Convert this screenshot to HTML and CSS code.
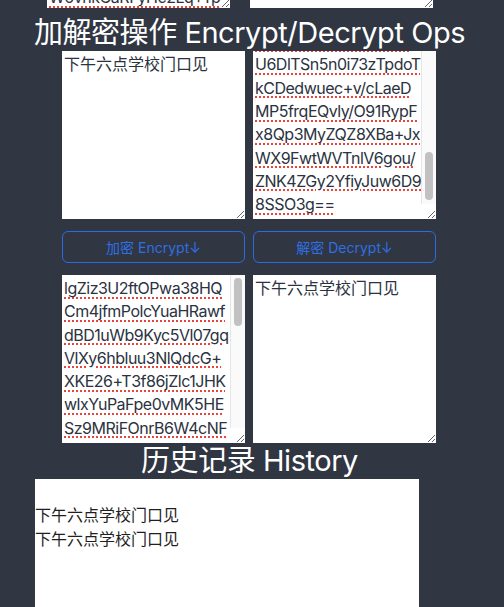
FILE: index.html
```html
<!DOCTYPE html>
<html lang="zh-CN">
<head>
<meta charset="utf-8">
<title>加解密操作 Encrypt/Decrypt Ops</title>
<link rel="stylesheet" href="styles.css">
</head>
<body>
<main class="page">
  <div class="prev-row">
    <div class="field">
      <textarea class="box cipher" data-scroll="19" spellcheck="false">Qx7PmA2kLr9Vb+Tc3N
eH5sJd0Wf8Yg1Ui6Ko
Zp4Bn/Xt7Ca2Rv9Me
Gl3Dq8Fw0Sy5Hj+Ln1
Ik6Ob2Pu9Ez4Tc7Va
Ms1Xr8Wn3Yq0Gd5Fh
Jk2Ce9Al/Bt6Ro4Zu
W6vnkGaRFyHc2Lq+Tp
Nd3Vx8Em1Hs5Ok0Pa
Yf7Bi2Cq9Rt4Gl6Uw
Dz0Jn3Mv/Ka8Se5Xo
Lh1Tq6Pw9Bc2Fy4Ri
Gu7Ak0Ns3Ze8Vm5Jd
Ox2Hb9Cl4Wq1Yt6Ep
Sg==</textarea>
      <div class="scrollbar"><div class="thumb" style="top: 22px"></div></div>
    </div>
    <textarea class="box" spellcheck="false"></textarea>
  </div>

  <h2 class="title title-ops">加解密操作 Encrypt/Decrypt Ops</h2>

  <div class="pair">
    <textarea class="box" spellcheck="false">下午六点学校门口见</textarea>
    <div class="field">
      <textarea class="box cipher" data-scroll="bottom" spellcheck="false">Hk3Qz8WmP2vNcR7tYb
aLq9XoE4uJfD1sGi0w
Tn6KyB+ZpVh5MrCe2Q
o8jUxS3gAdW7lF/bNm
Yt4iHq0zRk9PvLc1Ea
Gs2uXw8Oe/JnD5fM6y
Bp3ZhTq7Vk0rWiN4Ul
cE9aSx1gFm6Ho+Yd2j
Kv5tQb8zLn3CwR0Xp
fJ7Ue4yMi1DsA9Gq6
rO2hWk5NcT8lZ+Bv3
Pq8Lm1Xz6Rn0Jc4Ts
Ea3Wb7Yk/Hd9Fu2Gi
Nv5Qo1Ct8Zs4Mx0Bp
Jr6Kf2Ug9Ah3Tw+Ly
U6DlTSn5n0i73zTpdoT
kCDedwuec+v/cLaeD
MP5frqEQvly/O91RypF
x8Qp3MyZQZ8XBa+Jx
WX9FwtWVTnlV6gou/
ZNK4ZGy2YfiyJuw6D9
8SSO3g==</textarea>
      <div class="scrollbar"><div class="thumb" style="top: 101px"></div></div>
    </div>
  </div>

  <div class="pair actions">
    <button class="btn" type="button">加密 Encrypt↓</button>
    <button class="btn" type="button">解密 Decrypt↓</button>
  </div>

  <div class="pair">
    <div class="field">
      <textarea class="box cipher" spellcheck="false">lgZiz3U2ftOPwa38HQ
Cm4jfmPolcYuaHRawf
dBD1uWb9Kyc5Vl07gq
VlXy6hbluu3NlQdcG+
XKE26+T3f86jZlc1JHK
wlxYuPaFpe0vMK5HE
Sz9MRiFOnrB6W4cNF
Ta2Yp7Lk0Qm5Xv9Rd
Hc4Ns8Bw1Ej6Zg/Uo
Fi3Kt9Ma2Wq7Cy0Pl
Vb5Gr1Xe8Dn4Js+Oh
Am6Lu2Rk9Tz3Yf0Qw
Nc8Hp5Sd1Bi7Eg4Mv
Kx0Wo6Ft2Ul9Ca3Zj
Py7Gm4Rn/Vd1Lb8Ts
Qe2Jh5Xk0Ai6Nw9Cf
Oz3Bq8Yu1Mr4Dg7Hl
Eq==</textarea>
      <div class="scrollbar"><div class="thumb" style="top: 3px"></div></div>
    </div>
    <textarea class="box" spellcheck="false">下午六点学校门口见</textarea>
  </div>

  <h2 class="title title-history">历史记录 History</h2>

  <section class="history">
    <div class="history-item">下午六点学校门口见</div>
    <div class="history-item">下午六点学校门口见</div>
  </section>
</main>
<script src="script.js"></script>
</body>
</html>
```

FILE: styles.css
```css
html, body {
  margin: 0;
  padding: 0;
}

body {
  background: #303642;
  font-family: Inter, "Noto Sans CJK SC", sans-serif;
  overflow: hidden;
}

.page {
  display: flex;
  flex-direction: column;
}

.prev-row {
  height: 8px;
  overflow: hidden;
  display: flex;
  align-items: flex-end;
  gap: 20px;
  padding-left: 47px;
}

.title {
  margin: 0;
  padding-right: 5px;
  text-align: center;
  color: #ffffff;
  font-weight: 400;
  font-size: 29px;
  line-height: 36px;
  letter-spacing: -0.45px;
  white-space: nowrap;
}

.title-ops {
  margin-top: 7px;
}

.pair {
  display: flex;
  gap: 8px;
  padding-left: 62px;
}

.actions {
  margin: 12px 0;
}

.field {
  position: relative;
  flex: none;
  width: 183px;
  height: 168px;
}

.box {
  box-sizing: border-box;
  flex: none;
  display: block;
  width: 183px;
  height: 168px;
  margin: 0;
  padding: 2px;
  border: 0;
  outline: none;
  background: #ffffff;
  color: #2b3240;
  font-family: Inter, "Noto Sans CJK SC", sans-serif;
  font-size: 16px;
  line-height: 23.3px;
  resize: both;
}

.cipher {
  padding-right: 17px;
  white-space: pre;
  overflow: hidden;
  letter-spacing: -0.5px;
  text-decoration: underline dotted #e8433d;
  text-decoration-thickness: 2px;
  text-underline-offset: 3px;
}

.scrollbar {
  position: absolute;
  top: 0;
  right: 0;
  bottom: 15px;
  width: 15px;
  box-sizing: border-box;
  background: #fafafa;
  border-left: 1px solid #e6e6e6;
}

.thumb {
  position: absolute;
  left: 3px;
  width: 8px;
  height: 48px;
  border-radius: 4px;
  background: #c1c1c1;
}

.btn {
  box-sizing: border-box;
  flex: none;
  width: 183px;
  height: 32px;
  margin: 0;
  padding: 0;
  border: 1px solid #2d6be0;
  border-radius: 6px;
  background: transparent;
  color: #2f6fe2;
  font-family: Inter, "Noto Sans CJK SC", sans-serif;
  font-size: 14px;
  cursor: pointer;
}

.history {
  box-sizing: border-box;
  width: 384px;
  min-height: 200px;
  margin-left: 35px;
  padding-top: 24px;
  background: #ffffff;
  color: #1f1f1f;
  font-size: 16px;
  line-height: 24px;
}
```

FILE: script.js
```js
document.querySelectorAll('textarea[data-scroll]').forEach(function (t) {
  var v = t.getAttribute('data-scroll');
  t.scrollTop = v === 'bottom' ? t.scrollHeight : Number(v);
});
```
